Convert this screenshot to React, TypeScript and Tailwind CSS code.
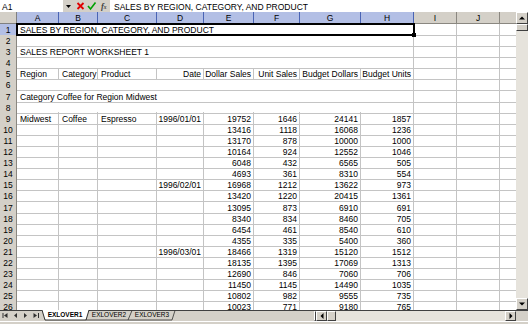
import React from "react";

const GRID = "grid grid-cols-[17px_42px_39px_59px_47px_50px_46px_61px_53px_43px_43px_16px]";
const TXT = "text-[8.5px] leading-[9px] whitespace-nowrap overflow-x-clip";
const BTN = "bg-[#d4d0c8] border border-t-white border-l-white border-r-[#404040] border-b-[#404040]";
const COLS = ["A", "B", "C", "D", "E", "F", "G", "H", "I", "J"];

type Row = { merged?: string; cells?: string[] };

const num = (d: string, e: string, f: string, g: string, h: string): Row => ({
  cells: ["", "", "", d, e, f, g, h],
});

const rows: Row[] = [
  { merged: "SALES BY REGION, CATEGORY, AND PRODUCT" },
  { merged: "" },
  { merged: "SALES REPORT WORKSHEET 1" },
  { merged: "" },
  { cells: ["Region", "Category", "Product", "Date", "Dollar Sales", "Unit Sales", "Budget Dollars", "Budget Units"] },
  { merged: "" },
  { merged: "Category Coffee for Region Midwest" },
  { merged: "" },
  { cells: ["Midwest", "Coffee", "Espresso", "1996/01/01", "19752", "1646", "24141", "1857"] },
  num("", "13416", "1118", "16068", "1236"),
  num("", "13170", "878", "10000", "1000"),
  num("", "10164", "924", "12552", "1046"),
  num("", "6048", "432", "6565", "505"),
  num("", "4693", "361", "8310", "554"),
  num("1996/02/01", "16968", "1212", "13622", "973"),
  num("", "13420", "1220", "20415", "1361"),
  num("", "13095", "873", "6910", "691"),
  num("", "8340", "834", "8460", "705"),
  num("", "6454", "461", "8540", "610"),
  num("", "4355", "335", "5400", "360"),
  num("1996/03/01", "18466", "1319", "15120", "1512"),
  num("", "18135", "1395", "17069", "1313"),
  num("", "12690", "846", "7060", "706"),
  num("", "11450", "1145", "14490", "1035"),
  num("", "10802", "982", "9555", "735"),
  num("", "10023", "771", "9180", "765"),
];

function FormulaBar() {
  return (
    <div className="flex h-[12px] bg-[#d4d0c8]">
      <div className={`${TXT} w-[63px] bg-white pl-[2px] pt-[2.5px]`}>A1</div>
      <div className="flex w-[38px] items-center">
        <svg width="38" height="12" viewBox="0 0 38 12">
          <path d="M3 5 L8 5 L5.5 8 Z" fill="#000" />
          <path d="M14.5 3 L20.5 9 M20.5 3 L14.5 9" stroke="#e00000" strokeWidth="1.8" />
          <path d="M25 6 L27.5 9 L32.5 2.5" stroke="#00a000" strokeWidth="1.6" fill="none" />
        </svg>
      </div>
      <div className="w-[9px] pt-[1.5px] font-['Liberation_Serif',serif] text-[8.5px] font-bold italic leading-[9px] text-[#404040]">
        f<span className="text-[5.5px]">x</span>
      </div>
      <div className={`${TXT} flex-1 bg-white pl-[4px] pt-[2.5px]`}>
        SALES BY REGION, CATEGORY, AND PRODUCT
      </div>
    </div>
  );
}

function Sheet() {
  return (
    <div className="relative h-[298px] w-[516px] overflow-hidden bg-white">
      <div className={`${GRID} h-[11.5px]`}>
        <div className="border-b border-r border-[#808080] bg-[#d4d0c8]" />
        {COLS.map((c, i) => (
          <div
            key={c}
            className={`${TXT} border-b border-r pt-[1.5px] text-center ${
              i < 8 ? "border-[#4a64b4] bg-[#b3bfe5]" : "border-[#8a8780] bg-[#d4d0c8]"
            }`}
          >
            {c}
          </div>
        ))}
        <div className="border-b border-[#8a8780] bg-[#d4d0c8]" />
      </div>

      {rows.map((r, ri) => (
        <div key={ri} className={`${GRID} h-[11.1px]`}>
          <div
            className={`${TXT} border-b border-r pt-[2.5px] text-center ${
              ri === 0 ? "border-[#4a64b4] bg-[#b3bfe5]" : "border-[#8a8780] bg-[#d4d0c8]"
            }`}
          >
            {ri + 1}
          </div>
          {r.merged !== undefined ? (
            <div className={`${TXT} col-span-8 border-b border-r border-[#c4c4c4] pl-[3px] pt-[2.5px]`}>
              {r.merged}
            </div>
          ) : (
            r.cells!.map((v, ci) => (
              <div
                key={ci}
                className={`${TXT} border-b border-r border-[#c4c4c4] pt-[2.5px] ${
                  ci < 3 ? "pl-[3px] text-left" : "pr-[2px] text-right"
                }`}
              >
                {v}
              </div>
            ))
          )}
          <div className="border-b border-r border-[#c4c4c4]" />
          <div className="border-b border-r border-[#c4c4c4]" />
          <div className="border-b border-[#c4c4c4]" />
        </div>
      ))}

      {/* selection box A1:H1 */}
      <div className="pointer-events-none absolute left-[16px] top-[10.5px] h-[13px] w-[399px] border-2 border-black" />
      <div className="absolute left-[412px] top-[21px] h-[4px] w-[4px] bg-black" />
    </div>
  );
}

function VScroll() {
  return (
    <div className="flex h-[298px] w-[12px] flex-col bg-[#e6e3dc]">
      <div className={`${BTN} flex h-[12px] items-center justify-center`}>
        <svg width="6" height="4" viewBox="0 0 6 4">
          <path d="M0 3.5 L6 3.5 L3 0.5 Z" fill="#000" />
        </svg>
      </div>
      <div className={`${BTN} h-[7px]`} />
      <div className="flex-1" />
      <div className={`${BTN} flex h-[12px] items-center justify-center`}>
        <svg width="6" height="4" viewBox="0 0 6 4">
          <path d="M0 0.5 L6 0.5 L3 3.5 Z" fill="#000" />
        </svg>
      </div>
    </div>
  );
}

function Tabs() {
  return (
    <div className="flex h-[10.5px] bg-[#d4d0c8]">
      <div className="w-[42px] border-t border-[#404040]">
        <svg width="42" height="10" viewBox="0 0 42 10">
          <path d="M3 2 L3 7" stroke="#303030" strokeWidth="1" />
          <path d="M4 4.5 L7.5 2 L7.5 7 Z" fill="#303030" />
          <path d="M14 4.5 L17 2 L17 7 Z" fill="#303030" />
          <path d="M27 4.5 L24 2 L24 7 Z" fill="#303030" />
          <path d="M37 4.5 L33.5 2 L33.5 7 Z" fill="#303030" />
          <path d="M38.5 2 L38.5 7" stroke="#303030" strokeWidth="1" />
        </svg>
      </div>
      <div className="relative flex w-[136px] text-[6.5px] leading-[10px]">
        <svg className="absolute inset-0" width="136" height="11" viewBox="0 0 136 11">
          <path d="M47 0.5 L136 0.5" stroke="#404040" strokeWidth="1" />
          <path d="M44 10 L86 10 L90 0.5" stroke="#303030" strokeWidth="0.8" fill="none" />
          <path d="M86 10 L130 10 L133 0.5" stroke="#303030" strokeWidth="0.8" fill="none" />
          <path d="M0 0 L3 10 L44 10 L47 0 Z" fill="#fff" />
          <path d="M0 0 L3 10 L44 10 L47 0" stroke="#000" strokeWidth="0.8" fill="none" />
        </svg>
        <span className="relative w-[46px] text-center font-bold">EXLOVER1</span>
        <span className="relative w-[42px] text-center">EXLOVER2</span>
        <span className="relative w-[44px] text-center">EXLOVER3</span>
      </div>
      <div className="w-[136px] border-t border-[#404040]" />
      <div className="flex w-[202px] border-t border-[#404040]">
        <div className={`${BTN} w-[2px]`} />
        <div className={`${BTN} flex w-[11px] items-center justify-center`}>
          <svg width="4" height="6" viewBox="0 0 4 6">
            <path d="M3.5 0 L3.5 6 L0.5 3 Z" fill="#000" />
          </svg>
        </div>
        <div className={`${BTN} w-[9px]`} />
        <div className="flex-1 bg-[#e6e3dc]" />
        <div className={`${BTN} flex w-[11px] items-center justify-center`}>
          <svg width="4" height="6" viewBox="0 0 4 6">
            <path d="M0.5 0 L0.5 6 L3.5 3 Z" fill="#000" />
          </svg>
        </div>
      </div>
      <div className="w-[12px] border-t border-[#404040] bg-[#d4d0c8]" />
    </div>
  );
}

export default function App() {
  return (
    <div className="h-[324px] w-[528px] overflow-hidden bg-[#d4d0c8] font-['Liberation_Sans',Arial,sans-serif] text-black">
      <FormulaBar />
      <div className="flex">
        <Sheet />
        <VScroll />
      </div>
      <Tabs />
      <div className="h-[3.5px] border-t border-white bg-[#d4d0c8]" />
    </div>
  );
}
